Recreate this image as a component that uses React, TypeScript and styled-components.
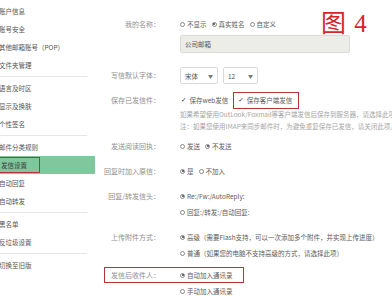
import React from 'react';
import styled, { createGlobalStyle } from 'styled-components';

const GlobalStyle = createGlobalStyle`
  html, body {
    margin: 0;
    padding: 0;
    background: #fff;
  }
  body {
    font-family: "Noto Sans CJK SC", "Noto Sans", sans-serif;
  }
`;

const Page = styled.div`
  position: relative;
  display: flex;
  width: 392px;
  height: 297px;
  overflow: hidden;
  background: #fff;
`;

const Sidebar = styled.nav`
  width: 95px;
  flex-shrink: 0;
  display: flex;
  flex-direction: column;
  padding-top: 2px;
`;

const NavItem = styled.div<{ $active?: boolean }>`
  height: 18px;
  display: flex;
  align-items: center;
  font-size: 6.5px;
  color: ${p => (p.$active ? '#3a3a3a' : '#555')};
  white-space: nowrap;
  margin-left: -1px;
  background: ${p => (p.$active ? '#80c79e' : 'transparent')};
`;

const Marked = styled.span`
  display: inline-flex;
  align-items: center;
  height: 16px;
  padding: 0 12px 0 1px;
  border: 1px solid #b8323a;
  box-sizing: border-box;
`;

const NavDivider = styled.div`
  height: 1px;
  background: #e6e6e6;
  margin: 2px 8px 2px 0;
`;

const Main = styled.main`
  flex: 1;
  display: flex;
  flex-direction: column;
  padding-top: 16px;
  min-width: 0;
`;

const Row = styled.div<{ $gap?: number }>`
  display: flex;
  margin-bottom: ${p => (p.$gap ?? 9)}px;
`;

const Label = styled.div`
  width: 65px;
  flex-shrink: 0;
  text-align: right;
  line-height: 16px;
  height: 16px;
  font-size: 7px;
  color: #8f8f8f;
  white-space: nowrap;
`;

const Values = styled.div`
  margin-left: 20px;
  display: flex;
  flex-direction: column;
  min-width: 0;
`;

const Line = styled.div<{ $h?: number }>`
  height: ${p => p.$h ?? 16}px;
  display: flex;
  align-items: center;
  gap: 5px;
  font-size: 6.5px;
  color: #5c5c5c;
  white-space: nowrap;
`;

const Note = styled.div`
  height: 12px;
  line-height: 12px;
  font-size: 6.5px;
  color: #a5a5a5;
  white-space: nowrap;
  &:first-of-type {
    margin-top: 1px;
  }
`;

const Choice = styled.span`
  display: inline-flex;
  align-items: center;
  gap: 2px;
`;

const Dot = styled.span<{ $on?: boolean }>`
  width: 5px;
  height: 5px;
  border-radius: 50%;
  border: 0.8px solid #8a8a8a;
  box-sizing: border-box;
  display: inline-flex;
  align-items: center;
  justify-content: center;
  &::after {
    content: '';
    width: 2px;
    height: 2px;
    border-radius: 50%;
    background: ${p => (p.$on ? '#444' : 'transparent')};
  }
`;

const Tick = styled.span`
  font-size: 6.5px;
  font-weight: bold;
  color: #222;
  margin-right: 3px;
  font-family: "DejaVu Sans", sans-serif;
`;

const CheckBox = styled.span<{ $marked?: boolean }>`
  display: inline-flex;
  align-items: center;
  height: 17px;
  box-sizing: border-box;
  padding: 0 0 0 4px;
  width: ${p => (p.$marked ? '66px' : 'auto')};
  border: 1px solid ${p => (p.$marked ? '#b8323a' : 'transparent')};
  margin-left: ${p => (p.$marked ? '4px' : '-4px')};
`;

const TextInput = styled.div`
  width: 170px;
  height: 18px;
  margin-top: 3px;
  box-sizing: border-box;
  border: 1px solid #dcdcd6;
  background: #ececE8;
  border-radius: 2px;
  display: flex;
  align-items: center;
  padding-left: 4px;
  font-size: 6.5px;
  color: #555;
`;

const Select = styled.div<{ $w: number }>`
  width: ${p => p.$w}px;
  height: 17px;
  box-sizing: border-box;
  border: 1px solid #dadada;
  border-radius: 2px;
  display: flex;
  align-items: center;
  justify-content: space-between;
  padding: 0 4px;
  font-size: 6.5px;
  color: #555;
`;

const Caret = styled.span`
  font-size: 5px;
  color: #777;
`;

const MarkedRow = styled.div`
  display: flex;
  width: 140px;
  height: 16px;
  box-sizing: border-box;
  margin-left: 9px;
  border: 1px solid #b8323a;
  align-items: center;
`;

const InnerLabel = styled(Label)`
  width: 55px;
  line-height: 14px;
  height: 14px;
`;

const Stamp = styled.div`
  position: absolute;
  top: 3px;
  left: 321px;
  font-family: "Liberation Serif", "Noto Sans CJK SC", serif;
  font-size: 25px;
  color: #d6262c;
  letter-spacing: 1px;
  white-space: nowrap;
`;

const Radio: React.FC<{ on?: boolean; children: React.ReactNode }> = ({ on, children }) => (
  <Choice>
    <Dot $on={on} />
    {children}
  </Choice>
);

const navGroups: string[][] = [
  ['账户信息', '账号安全', '其他邮箱账号（POP）', '文件夹管理'],
  ['语言及时区', '显示及换肤', '个性签名'],
  ['邮件分类规则', '发信设置', '自动回复', '自动转发'],
  ['黑名单', '反垃圾设置'],
  ['切换至旧版'],
];

export default function App() {
  return (
    <Page>
      <GlobalStyle />
      <Sidebar>
        {navGroups.map((group, gi) => (
          <React.Fragment key={gi}>
            {gi > 0 && <NavDivider />}
            {group.map(item =>
              item === '发信设置' ? (
                <NavItem key={item} $active>
                  <Marked>{item}</Marked>
                </NavItem>
              ) : (
                <NavItem key={item}>{item}</NavItem>
              )
            )}
          </React.Fragment>
        ))}
      </Sidebar>

      <Main>
        <Row $gap={14}>
          <Label>我的名称：</Label>
          <Values>
            <Line>
              <Radio>不显示</Radio>
              <Radio on>真实姓名</Radio>
              <Radio>自定义</Radio>
            </Line>
            <TextInput>公司邮箱</TextInput>
          </Values>
        </Row>

        <Row $gap={8}>
          <Label style={{ lineHeight: '17px', height: 17 }}>写信默认字体：</Label>
          <Values>
            <Line $h={17}>
              <Select $w={38}>
                宋体 <Caret>▼</Caret>
              </Select>
              <Select $w={35}>
                12 <Caret>▼</Caret>
              </Select>
            </Line>
          </Values>
        </Row>

        <Row $gap={6}>
          <Label>保存已发信件：</Label>
          <Values>
            <Line $h={16} style={{ gap: 0 }}>
              <CheckBox>
                <Tick>✓</Tick>保存web发信
              </CheckBox>
              <CheckBox $marked>
                <Tick>✓</Tick>保存客户端发信
              </CheckBox>
            </Line>
            <Note>如果希望使用OutLook/Foxmail等客户端发信后保存到服务器，请选择此项。</Note>
            <Note>注：如果您使用IMAP来同步邮件时，为避免重复保存已发信，请关闭此项。</Note>
          </Values>
        </Row>

        <Row>
          <Label>发送阅读回执：</Label>
          <Values>
            <Line>
              <Radio>发送</Radio>
              <Radio on>不发送</Radio>
            </Line>
          </Values>
        </Row>

        <Row>
          <Label>回复时加入原信：</Label>
          <Values>
            <Line>
              <Radio on>是</Radio>
              <Radio>不加入</Radio>
            </Line>
          </Values>
        </Row>

        <Row>
          <Label>回复/转发信头：</Label>
          <Values>
            <Line>
              <Radio on>Re:/Fw:/AutoReply:</Radio>
            </Line>
            <Line>
              <Radio>回复:/转发:/自动回复:</Radio>
            </Line>
          </Values>
        </Row>

        <Row $gap={6}>
          <Label>上传附件方式：</Label>
          <Values>
            <Line>
              <Radio on>高级（需要Flash支持，可以一次添加多个附件，并实现上传进度）</Radio>
            </Line>
            <Line>
              <Radio>普通（如果您的电脑不支持高级的方式，请选择此项）</Radio>
            </Line>
          </Values>
        </Row>

        <MarkedRow>
          <InnerLabel>发信后收件人：</InnerLabel>
          <Values>
            <Line $h={14}>
              <Radio on>自动加入通讯录</Radio>
            </Line>
          </Values>
        </MarkedRow>
        <Row>
          <Label />
          <Values>
            <Line>
              <Radio>手动加入通讯录</Radio>
            </Line>
          </Values>
        </Row>
      </Main>

      <Stamp>图 4</Stamp>
    </Page>
  );
}
